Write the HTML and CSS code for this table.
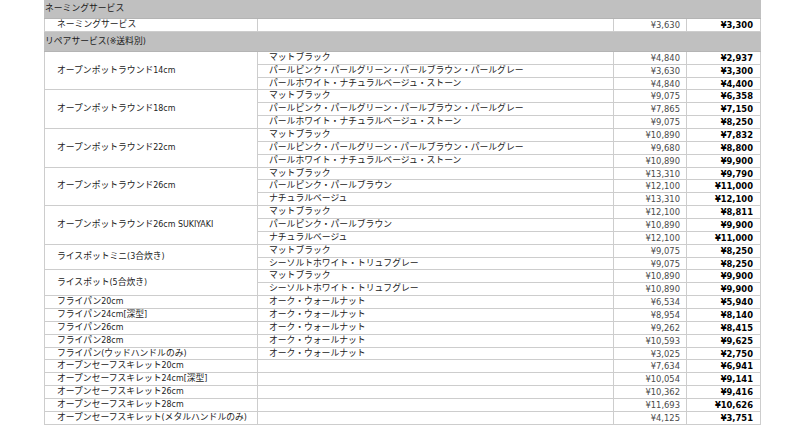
FILE: index.html
```html
<!DOCTYPE html>
<html lang="ja">
<head>
<meta charset="utf-8">
<link rel="stylesheet" href="styles.css">
</head>
<body>
<table class="price">
<colgroup><col class="c1"><col class="c2"><col class="c3"><col class="c4"></colgroup>
<tbody>
<tr class="head"><td colspan="4">ネーミングサービス</td></tr>
<tr><td class="name">ネーミングサービス</td><td></td><td class="list">¥3,630</td><td class="sale">¥3,300</td></tr>
<tr class="head"><td colspan="4">リペアサービス(※送料別)</td></tr>

<tr><td class="name" rowspan="3">オープンポットラウンド14cm</td><td class="color">マットブラック</td><td class="list">¥4,840</td><td class="sale">¥2,937</td></tr>
<tr><td class="color">パールピンク・パールグリーン・パールブラウン・パールグレー</td><td class="list">¥3,630</td><td class="sale">¥3,300</td></tr>
<tr><td class="color">パールホワイト・ナチュラルベージュ・ストーン</td><td class="list">¥4,840</td><td class="sale">¥4,400</td></tr>

<tr><td class="name" rowspan="3">オープンポットラウンド18cm</td><td class="color">マットブラック</td><td class="list">¥9,075</td><td class="sale">¥6,358</td></tr>
<tr><td class="color">パールピンク・パールグリーン・パールブラウン・パールグレー</td><td class="list">¥7,865</td><td class="sale">¥7,150</td></tr>
<tr><td class="color">パールホワイト・ナチュラルベージュ・ストーン</td><td class="list">¥9,075</td><td class="sale">¥8,250</td></tr>

<tr><td class="name" rowspan="3">オープンポットラウンド22cm</td><td class="color">マットブラック</td><td class="list">¥10,890</td><td class="sale">¥7,832</td></tr>
<tr><td class="color">パールピンク・パールグリーン・パールブラウン・パールグレー</td><td class="list">¥9,680</td><td class="sale">¥8,800</td></tr>
<tr><td class="color">パールホワイト・ナチュラルベージュ・ストーン</td><td class="list">¥10,890</td><td class="sale">¥9,900</td></tr>

<tr><td class="name" rowspan="3">オープンポットラウンド26cm</td><td class="color">マットブラック</td><td class="list">¥13,310</td><td class="sale">¥9,790</td></tr>
<tr><td class="color">パールピンク・パールブラウン</td><td class="list">¥12,100</td><td class="sale">¥11,000</td></tr>
<tr><td class="color">ナチュラルベージュ</td><td class="list">¥13,310</td><td class="sale">¥12,100</td></tr>

<tr><td class="name" rowspan="3">オープンポットラウンド26cm SUKIYAKI</td><td class="color">マットブラック</td><td class="list">¥12,100</td><td class="sale">¥8,811</td></tr>
<tr><td class="color">パールピンク・パールブラウン</td><td class="list">¥10,890</td><td class="sale">¥9,900</td></tr>
<tr><td class="color">ナチュラルベージュ</td><td class="list">¥12,100</td><td class="sale">¥11,000</td></tr>

<tr><td class="name" rowspan="2">ライスポットミニ(3合炊き)</td><td class="color">マットブラック</td><td class="list">¥9,075</td><td class="sale">¥8,250</td></tr>
<tr><td class="color">シーソルトホワイト・トリュフグレー</td><td class="list">¥9,075</td><td class="sale">¥8,250</td></tr>

<tr><td class="name" rowspan="2">ライスポット(5合炊き)</td><td class="color">マットブラック</td><td class="list">¥10,890</td><td class="sale">¥9,900</td></tr>
<tr><td class="color">シーソルトホワイト・トリュフグレー</td><td class="list">¥10,890</td><td class="sale">¥9,900</td></tr>

<tr><td class="name">フライパン20cm</td><td class="color">オーク・ウォールナット</td><td class="list">¥6,534</td><td class="sale">¥5,940</td></tr>
<tr><td class="name">フライパン24cm[深型]</td><td class="color">オーク・ウォールナット</td><td class="list">¥8,954</td><td class="sale">¥8,140</td></tr>
<tr><td class="name">フライパン26cm</td><td class="color">オーク・ウォールナット</td><td class="list">¥9,262</td><td class="sale">¥8,415</td></tr>
<tr><td class="name">フライパン28cm</td><td class="color">オーク・ウォールナット</td><td class="list">¥10,593</td><td class="sale">¥9,625</td></tr>
<tr><td class="name">フライパン(ウッドハンドルのみ)</td><td class="color">オーク・ウォールナット</td><td class="list">¥3,025</td><td class="sale">¥2,750</td></tr>

<tr><td class="name">オープンセーフスキレット20cm</td><td class="color"></td><td class="list">¥7,634</td><td class="sale">¥6,941</td></tr>
<tr><td class="name">オープンセーフスキレット24cm[深型]</td><td class="color"></td><td class="list">¥10,054</td><td class="sale">¥9,141</td></tr>
<tr><td class="name">オープンセーフスキレット26cm</td><td class="color"></td><td class="list">¥10,362</td><td class="sale">¥9,416</td></tr>
<tr><td class="name">オープンセーフスキレット28cm</td><td class="color"></td><td class="list">¥11,693</td><td class="sale">¥10,626</td></tr>
<tr><td class="name">オープンセーフスキレット(メタルハンドルのみ)</td><td class="color"></td><td class="list">¥4,125</td><td class="sale">¥3,751</td></tr>
</tbody>
</table>
</body>
</html>
```

FILE: styles.css
```css
html, body {
  margin: 0;
  padding: 0;
  background: #fff;
}
body {
  font-family: "DejaVu Sans Condensed", "Liberation Sans", "Noto Sans CJK JP", sans-serif;
  font-size: 8.8px;
  color: #222;
}
.price {
  border-collapse: collapse;
  table-layout: fixed;
  width: 716px;
  margin: -2px 0 0 44px;
}
.c1 { width: 213px; }
.c2 { width: 356px; }
.c3 { width: 73px; }
.c4 { width: 74px; }
.price td {
  border: 1px solid #cdcdcd;
  padding: 0;
  line-height: 11.86px;
  height: 11.86px;
  white-space: nowrap;
  overflow: hidden;
  vertical-align: middle;
}
.price .head td {
  background: #c0c0c0;
  border-color: #c0c0c0 #c0c0c0 #b4b4b4;
  line-height: 19px;
  height: 19px;
  padding-left: 0;
  color: #1a1a1a;
  font-size: 8.8px;
}
.price td.name { padding-left: 12px; }
.price td.color { padding-left: 11px; }
.price td.list {
  text-align: right;
  padding-right: 6px;
  color: #4a4a4a;
  font-size: 9.3px;
}
.price td.sale {
  text-align: right;
  padding-right: 7px;
  font-weight: bold;
  color: #000;
  font-size: 9.3px;
}
```
